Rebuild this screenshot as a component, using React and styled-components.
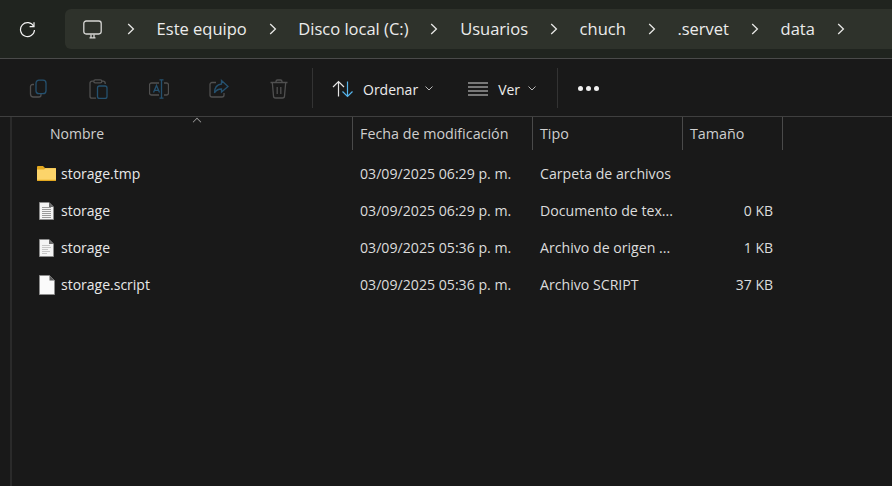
import React from 'react'
import styled, { createGlobalStyle } from 'styled-components'

const GlobalStyle = createGlobalStyle`
html,body{
    margin:0;
    padding:0;
    height:100%;
    background:#191919;
    overflow:hidden;
}
#root{height:100%;}
`

const crumbs = ['Este equipo', 'Disco local (C:)', 'Usuarios', 'chuch', '.servet', 'data']

const files = [
    { name: 'storage.tmp', date: '03/09/2025 06:29 p. m.', type: 'Carpeta de archivos', size: '', icon: 'folder' },
    { name: 'storage', date: '03/09/2025 06:29 p. m.', type: 'Documento de tex...', size: '0 KB', icon: 'text' },
    { name: 'storage', date: '03/09/2025 05:36 p. m.', type: 'Archivo de origen ...', size: '1 KB', icon: 'source' },
    { name: 'storage.script', date: '03/09/2025 05:36 p. m.', type: 'Archivo SCRIPT', size: '37 KB', icon: 'blank' },
]

const Chevron = () => (
    <svg width="8" height="12" viewBox="0 0 8 12" fill="none" stroke="#e8e8e6" strokeWidth="1.3">
        <path d="M1.2 1 6.4 6 1.2 11" />
    </svg>
)

const SmallCaret = () => (
    <svg width="8" height="5" viewBox="0 0 8 5" fill="none" stroke="#b8b8b8" strokeWidth="1">
        <path d="M.5.5 4 4 7.5.5" />
    </svg>
)

function FileIcon({ kind }) {
    if (kind === 'folder') {
        return (
            <svg width="19" height="15" viewBox="0 0 19 15">
                <path d="M0 1a1 1 0 0 1 1-1h5l2 2h10a1 1 0 0 1 1 1v2H0z" fill="#e3a81f" />
                <path d="M0 3.500h7l1.500-1.200H19V14a1 1 0 0 1-1 1H1a1 1 0 0 1-1-1z" fill="#fcd46a" />
                <path d="M0 13.800h19V14a1 1 0 0 1-1 1H1a1 1 0 0 1-1-1z" fill="#e3a81f" />
            </svg>
        )
    }
    if (kind === 'blank') {
        return (
            <svg width="16" height="20" viewBox="0 0 16 20">
                <path d="M.5.5h10l5 5v14H.5z" fill="#fafafa" stroke="#8c8c8c" />
                <path d="M10.500.5v5h5z" fill="#5c5c5c" />
            </svg>
        )
    }
    const lines = kind === 'text'
        ? [5.5, 7.5, 9.5, 11.5, 13.5, 15.5].map(y => <path key={y} d={`M3 ${y}h9`} stroke="#9a9a9a" />)
        : [[6.5, 8], [8.5, 9], [10.5, 6], [12.5, 8], [14.5, 5]].map(([y, w]) => <path key={y} d={`M3 ${y}h${w}`} stroke="#c6c6c6" />)
    return (
        <svg width="15" height="18" viewBox="0 0 15 18">
            <path d="M.5.500h9.500l4.500 4.500v12.500H.5z" fill="#f4f4f4" stroke="#8c8c8c" />
            <path d="M10 .5v4.500h4.500z" fill="#6a6a6a" />
            {lines}
        </svg>
    )
}

const GREY = '#505050'
const BLUE = '#25516f'

function App() {
    return (
        <Window>
            <GlobalStyle />
            <TopBar>
                <RefreshButton>
                    <svg width="17" height="17" viewBox="0 0 17 17" fill="none" stroke="#f2f2f2" strokeWidth="1.2">
                        <path d="M14.7 5.3A7 7 0 1 0 15.5 9" />
                        <path d="M15 1.2v4.400h-4.400" />
                    </svg>
                </RefreshButton>
                <Breadcrumb>
                    <MonitorSlot>
                        <svg width="19" height="19" viewBox="0 0 19 19" fill="none" stroke="#d6d6d4" strokeWidth="1.3">
                            <rect x=".8" y="1" width="17.4" height="13" rx="2.4" />
                            <path d="M6.500 17.800h6M8 14.500v3M11 14.500v3" />
                        </svg>
                    </MonitorSlot>
                    <Chevron />
                    {crumbs.map(c => (
                        <React.Fragment key={c}>
                            <Crumb>{c}</Crumb>
                            <Chevron />
                        </React.Fragment>
                    ))}
                </Breadcrumb>
            </TopBar>
            <Toolbar>
                <ToolIcon>
                    <svg width="20" height="20" viewBox="0 0 20 20" fill="none" strokeWidth="1.3">
                        <path d="M5 5.500H3.500a2 2 0 0 0-2 2V15a3 3 0 0 0 3 3H10a2 2 0 0 0 2-2v-1" stroke={GREY} />
                        <rect x="7" y="1.200" width="10" height="13.500" rx="3" stroke={BLUE} />
                    </svg>
                </ToolIcon>
                <ToolIcon>
                    <svg width="20" height="20" viewBox="0 0 20 20" fill="none" strokeWidth="1.3">
                        <path d="M4.500 2.200H3a2 2 0 0 0-2 2v13a2 2 0 0 0 2 2h4M13 2.200h1.200a2 2 0 0 1 2 2V5" stroke={GREY} />
                        <rect x="4.800" y=".8" width="8" height="3" rx="1.400" stroke={GREY} />
                        <rect x="8.500" y="7" width="9.500" height="12.500" rx="2" stroke={BLUE} />
                    </svg>
                </ToolIcon>
                <ToolIcon>
                    <svg width="20" height="20" viewBox="0 0 20 20" fill="none" strokeWidth="1.3">
                        <path d="M10 4H2.500a2 2 0 0 0-2 2v8a2 2 0 0 0 2 2H10M15 4h2.500a2 2 0 0 1 2 2v8a2 2 0 0 1-2 2H15" stroke={GREY} />
                        <path d="M4.500 13.500 7.500 6.500l3 7M5.500 11.300h4M12.500 1v18M10.500 .8h4M10.500 19.200h4" stroke={BLUE} />
                    </svg>
                </ToolIcon>
                <ToolIcon>
                    <svg width="20" height="20" viewBox="0 0 20 20" fill="none" strokeWidth="1.3">
                        <path d="M7 3.500H3a2 2 0 0 0-2 2V16a2 2 0 0 0 2 2h10a2 2 0 0 0 2-2v-2" stroke={GREY} />
                        <path d="M12.500 1.500 19 7.500l-6.500 5.500V10C9.500 10 7 11 5.500 14c0-5 2.500-8.500 7-9z" stroke={BLUE} />
                    </svg>
                </ToolIcon>
                <ToolIcon>
                    <svg width="20" height="20" viewBox="0 0 20 20" fill="none" stroke={GREY} strokeWidth="1.3">
                        <path d="M1.500 3.500h17M7 3.500V2.500a1.500 1.500 0 0 1 1.500-1.500h3a1.500 1.500 0 0 1 1.500 1.500v1M3.300 3.500 4.500 17a2 2 0 0 0 2 2h7a2 2 0 0 0 2-2l1.200-13.500M8.200 8v7M11.800 8v7" />
                    </svg>
                </ToolIcon>
                <ToolDivider $left="-17px" />
                <ToolButton $left="19px" $gap="9px" $caretGap="7px">
                    <svg width="22" height="18" viewBox="0 0 22 18" fill="none" strokeWidth="1.2">
                        <path d="M6.500 16.500V1.500M1 7l5.500-5.500L12 7" stroke="#e4e4e4" />
                        <path d="M15.500 1.500v15M10.500 11.500l5 5 5-5" stroke="#54b4ec" />
                    </svg>
                    <ToolLabel>Ordenar</ToolLabel>
                    <SmallCaret />
                </ToolButton>
                <ToolButton $left="35px" $gap="10px" $caretGap="8px">
                    <svg width="20" height="14" viewBox="0 0 20 14" fill="none" stroke="#d8d8d8" strokeWidth="1.1">
                        <path d="M0 1h20M0 5h20M0 9h20M0 13h20" />
                    </svg>
                    <ToolLabel>Ver</ToolLabel>
                    <SmallCaret />
                </ToolButton>
                <ToolDivider $left="21px" />
                <MoreDots><i /><i /><i /></MoreDots>
            </Toolbar>
            <ListPane>
                <SideStripe />
                <ListBody>
                    <HeaderRow>
                        <NameHead>Nombre<SortCaret /></NameHead>
                        <HeadCell>Fecha de modificación</HeadCell>
                        <HeadCell>Tipo</HeadCell>
                        <HeadCell>Tamaño</HeadCell>
                        <EndCell />
                    </HeaderRow>
                    <Rows>
                        {files.map((f, i) => (
                            <FileRow key={i}>
                                <NameCell>
                                    <IconSlot><FileIcon kind={f.icon} /></IconSlot>
                                    {f.name}
                                </NameCell>
                                <Cell>{f.date}</Cell>
                                <Cell>{f.type}</Cell>
                                <SizeCell>{f.size}</SizeCell>
                            </FileRow>
                        ))}
                    </Rows>
                </ListBody>
            </ListPane>
        </Window>
    )
}

export default App

const Window = styled.div`
display:flex;
flex-direction:column;
height:486px;
width:892px;
overflow:hidden;
background:#191919;
font-family:"Open Sans","Noto Sans",sans-serif;
color:#e6e6e6;
`

const TopBar = styled.div`
display:flex;
align-items:center;
height:58px;
flex-shrink:0;
background:#20241f;
border-bottom:1px solid #4a4a4a;
`

const RefreshButton = styled.div`
display:flex;
width:65px;
padding-left:19px;
box-sizing:border-box;
`

const Breadcrumb = styled.div`
flex:1;
height:40px;
display:flex;
align-items:center;
gap:21.800px;
padding-left:18px;
background:#2e322b;
border-radius:6px 0 0 6px;
`

const MonitorSlot = styled.div`
display:flex;
margin-right:3px;
`

const Crumb = styled.span`
font-size:16.500px;
color:#ececec;
white-space:nowrap;
padding-bottom:2px;
`

const Toolbar = styled.div`
display:flex;
align-items:center;
height:57px;
box-sizing:content-box;
flex-shrink:0;
padding-left:29px;
border-bottom:1px solid #3f3f3f;
`

const ToolIcon = styled.div`
display:flex;
width:60px;
padding-top:2px;
`

const ToolDivider = styled.div`
width:1px;
height:40px;
background:#333333;
margin-left:${p => p.$left};
`

const ToolButton = styled.div`
display:flex;
align-items:center;
margin-left:${p => p.$left};
padding-top:2px;
>span{
    margin:0 ${p => p.$caretGap} 0 ${p => p.$gap};
}
`

const ToolLabel = styled.span`
font-size:14px;
color:#ececec;
padding-top:1px;
`

const MoreDots = styled.div`
display:flex;
gap:3px;
margin-left:20px;
padding-top:2px;
>i{
    width:5px;
    height:5px;
    border-radius:50%;
    background:#f0f0f0;
}
`

const ListPane = styled.div`
flex:1;
display:flex;
`

const SideStripe = styled.div`
width:2px;
margin-left:10px;
background:#2a2a2a;
flex-shrink:0;
`

const ListBody = styled.div`
flex:1;
`

const HeaderRow = styled.div`
display:grid;
grid-template-columns:340px 180px 150px 100px 1px;
height:33px;
`

const NameHead = styled.div`
position:relative;
font-size:14px;
line-height:33px;
color:#cfcfcf;
padding-left:38px;
`

const SortCaret = styled.span`
position:absolute;
left:181px;
top:1px;
width:7px;
height:7px;
border-left:1px solid #a8a8a8;
border-top:1px solid #a8a8a8;
transform:rotate(45deg) scale(.75);
`

const HeadCell = styled.div`
font-size:14.300px;
line-height:33px;
color:#cfcfcf;
padding-left:7px;
border-left:1px solid #4a4a4a;
white-space:nowrap;
`

const EndCell = styled.div`
border-left:1px solid #4a4a4a;
`

const Rows = styled.div`
padding-top:5px;
`

const FileRow = styled.div`
display:grid;
grid-template-columns:340px 180px 150px 100px;
height:37px;
align-items:center;
font-size:14px;
color:#e8e8e8;
`

const NameCell = styled.div`
display:flex;
align-items:center;
padding-left:25px;
`

const IconSlot = styled.div`
display:flex;
justify-content:center;
width:19px;
margin-right:5px;
`

const Cell = styled.div`
padding-left:8px;
white-space:nowrap;
font-size:14.150px;
color:#dcdcdc;
`

const SizeCell = styled.div`
text-align:right;
padding-right:9px;
font-size:14px;
color:#dcdcdc;
`
